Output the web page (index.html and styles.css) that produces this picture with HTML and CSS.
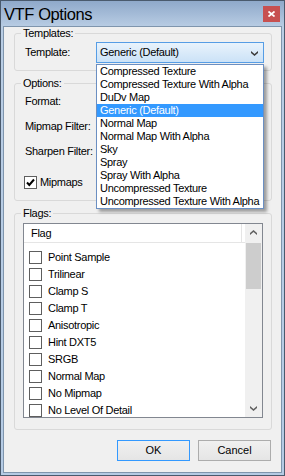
FILE: index.html
```html
<!DOCTYPE html>
<html lang="en">
<head>
  <meta charset="UTF-8">
  <meta name="viewport" content="width=device-width, initial-scale=1.0">
  <title>VTF Options</title>
  <link rel="stylesheet" href="styles.css">
</head>
<body>
  <div class="window">
    <div class="titlebar">
      <span class="title">VTF Options</span>
      <button class="close" title="Close">
        <svg width="7" height="6" viewBox="0 0 7 6"><path d="M0.5 0.5 L6.5 5.5 M6.5 0.5 L0.5 5.5" stroke="#fff" stroke-width="1.7" fill="none"/></svg>
      </button>
    </div>

    <div class="client">
      <fieldset class="group group-templates">
        <legend>Templates:</legend>
        <div class="field">
          <label>Template:</label>
          <div class="combo open">
            <span>Generic (Default)</span>
            <svg class="chevron" width="7" height="5" viewBox="0 0 7 5"><path d="M0 0 L3.5 3 L7 0 L7 2 L3.5 5 L0 2 Z" fill="#3c3c3c"/></svg>
          </div>
        </div>
      </fieldset>

      <!-- the combos here sit under the open template list -->
      <fieldset class="group group-options">
        <legend>Options:</legend>
        <div class="field">
          <label>Format:</label>
          <div class="combo"></div>
        </div>
        <div class="field">
          <label>Mipmap Filter:</label>
          <div class="combo"></div>
        </div>
        <div class="field">
          <label>Sharpen Filter:</label>
          <div class="combo"></div>
        </div>
        <label class="check">
          <span class="box">
            <svg width="11" height="11" viewBox="0 0 11 11"><path d="M2 5.5 L4.3 8 L9 2.5" stroke="#000" stroke-width="2" fill="none"/></svg>
          </span>
          <span>Mipmaps</span>
        </label>
      </fieldset>

      <fieldset class="group group-flags">
        <legend>Flags:</legend>
        <div class="listview">
          <div class="lv-main">
            <div class="lv-header"><div class="lv-col">Flag</div></div>
            <div class="lv-rows">
              <div class="lv-row"><span class="box"></span>Point Sample</div>
              <div class="lv-row"><span class="box"></span>Trilinear</div>
              <div class="lv-row"><span class="box"></span>Clamp S</div>
              <div class="lv-row"><span class="box"></span>Clamp T</div>
              <div class="lv-row"><span class="box"></span>Anisotropic</div>
              <div class="lv-row"><span class="box"></span>Hint DXT5</div>
              <div class="lv-row"><span class="box"></span>SRGB</div>
              <div class="lv-row"><span class="box"></span>Normal Map</div>
              <div class="lv-row"><span class="box"></span>No Mipmap</div>
              <div class="lv-row"><span class="box"></span>No Level Of Detail</div>
            </div>
          </div>
          <div class="scrollbar">
            <div class="sb-arrow">
              <svg width="7" height="5" viewBox="0 0 7 5"><path d="M0 5 L3.5 2 L7 5 L7 3 L3.5 0 L0 3 Z" fill="#606060"/></svg>
            </div>
            <div class="sb-thumb"></div>
            <div class="sb-track"></div>
            <div class="sb-arrow">
              <svg width="7" height="5" viewBox="0 0 7 5"><path d="M0 0 L3.5 3 L7 0 L7 2 L3.5 5 L0 2 Z" fill="#606060"/></svg>
            </div>
          </div>
        </div>
      </fieldset>

      <div class="buttons">
        <button class="btn btn-default">OK</button>
        <button class="btn">Cancel</button>
      </div>

      <ul class="dropdown">
        <li>Compressed Texture</li>
        <li>Compressed Texture With Alpha</li>
        <li>DuDv Map</li>
        <li class="selected">Generic (Default)</li>
        <li>Normal Map</li>
        <li>Normal Map With Alpha</li>
        <li>Sky</li>
        <li>Spray</li>
        <li>Spray With Alpha</li>
        <li>Uncompressed Texture</li>
        <li>Uncompressed Texture With Alpha</li>
      </ul>
    </div>
  </div>
</body>
</html>
```

FILE: styles.css
```css
* {
  margin: 0;
  padding: 0;
  box-sizing: border-box;
}

body {
  font-family: "Liberation Sans", Arial, sans-serif;
  font-size: 11px;
  letter-spacing: -0.3px;
  line-height: 13px;
  color: #000000;
  background: #ffffff;
}

.window {
  width: 285px;
  height: 476px;
  border: 1px solid #4a5a6d;
  background: linear-gradient(#8fa9ca, #b9cde4 26px, #b5cbe4);
  display: flex;
  flex-direction: column;
}

.titlebar {
  height: 25px;
  display: flex;
  align-items: center;
  padding-left: 3px;
}

.title {
  font-size: 16.5px;
  letter-spacing: -0.4px;
  line-height: 25px;
  padding-top: 1px;
}

.close {
  margin-left: auto;
  margin-right: 4px;
  align-self: flex-start;
  margin-top: 5px;
  width: 17px;
  height: 16px;
  border: none;
  background: #c75050;
  display: flex;
  align-items: center;
  justify-content: center;
}

.client {
  flex: 1;
  margin: 0 2px 2px;
  border: 1px solid #7f95ad;
  background: #f0f0f0;
  padding: 0 9px 0 10px;
  position: relative;
  display: flex;
  flex-direction: column;
}

/* group boxes */
.group {
  border: 1px solid #d9d9d9;
  border-radius: 3px;
  padding: 0 7px 7px 6px;
  min-width: 0;
}

.group legend {
  padding: 0 2px;
  line-height: 13px;
}

.group-templates {
  padding-top: 2px;
}

.group-options {
  margin-top: 6px;
  padding-top: 1px;
  padding-bottom: 11px;
  display: flex;
  flex-direction: column;
  gap: 4px;
}

.group-flags {
  margin-top: 6px;
  padding-top: 3px;
  padding-bottom: 11px;
}

.field {
  display: flex;
  align-items: center;
  padding-left: 4px;
}

.field label {
  width: 71px;
  white-space: nowrap;
}

.combo {
  flex: 1;
  height: 21px;
  border: 1px solid #acacac;
  background: linear-gradient(#f0f0f0, #e5e5e5);
  display: flex;
  align-items: center;
  padding: 0 5px 0 3px;
  white-space: nowrap;
}

.combo.open {
  border-color: #569de5;
  background: linear-gradient(#e9f3fc, #cbe2f7);
}

.chevron {
  margin-left: auto;
  margin-top: 1px;
}

/* checkbox */
.box {
  width: 13px;
  height: 13px;
  border: 1px solid #5e5e5e;
  background: #ffffff;
  display: flex;
  align-items: center;
  justify-content: center;
  flex-shrink: 0;
}

.check {
  display: flex;
  align-items: center;
  gap: 3px;
  margin-top: 10px;
  padding-left: 3px;
}

/* list view */
.listview {
  width: 240px;
  height: 195px;
  margin-left: 2px;
  border: 1px solid #828790;
  background: #ffffff;
  display: flex;
}

.lv-main {
  flex: 1;
  overflow: hidden;
}

.lv-header {
  height: 19px;
  border-bottom: 1px solid #e5e5e5;
}

.lv-col {
  width: 218px;
  height: 18px;
  line-height: 18px;
  padding-left: 7px;
  border-right: 1px solid #e5e5e5;
}

.lv-rows {
  padding-top: 6px;
}

.lv-row {
  height: 17px;
  display: flex;
  align-items: center;
  gap: 6px;
  padding-left: 5px;
  white-space: nowrap;
}

.scrollbar {
  width: 17px;
  background: #f0f0f0;
  display: flex;
  flex-direction: column;
}

.sb-arrow {
  height: 17px;
  display: flex;
  align-items: center;
  justify-content: center;
}

.sb-thumb {
  height: 46px;
  margin: 2px 1px 0;
  background: #cdcdcd;
}

.sb-track {
  flex: 1;
}

/* buttons */
.buttons {
  margin-top: 10px;
  display: flex;
  justify-content: flex-end;
  gap: 8px;
  padding-right: 1px;
}

.btn {
  width: 73px;
  height: 21px;
  border: 1px solid #acacac;
  background: linear-gradient(#f0f0f0, #e5e5e5);
  font: inherit;
  color: #000000;
}

.btn-default {
  border-color: #3399ff;
}

/* open template list */
.dropdown {
  position: absolute;
  left: 92px;
  top: 37px;
  width: 168px;
  list-style: none;
  border: 1px solid #6b8fc2;
  background: #ffffff;
  box-shadow: 3px 3px 3px rgba(0, 0, 0, 0.35);
  overflow: hidden;
}

.dropdown li {
  height: 13px;
  line-height: 13px;
  padding-left: 3px;
  white-space: nowrap;
}

.dropdown li.selected {
  background: #3399ff;
  color: #ffffff;
}
```
